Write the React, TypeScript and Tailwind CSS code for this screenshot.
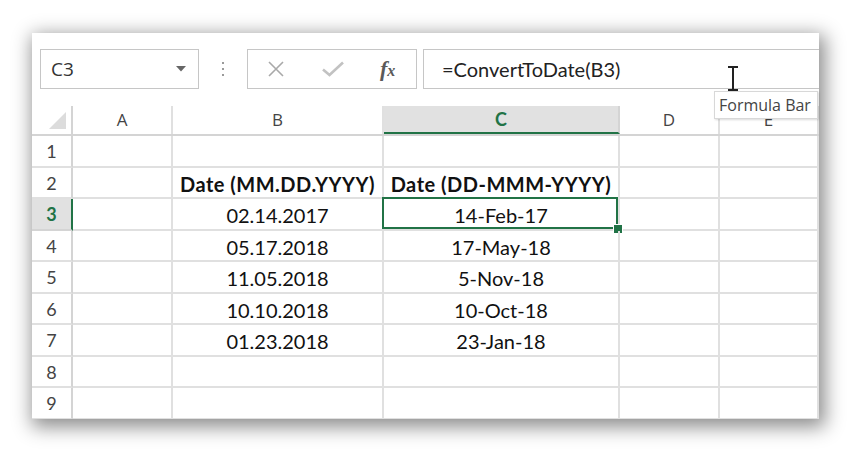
import React from 'react'

const cols = [
  { key: 'A', w: 'w-[100px]' },
  { key: 'B', w: 'w-[211px]' },
  { key: 'C', w: 'w-[236px]' },
  { key: 'D', w: 'w-[100px]' },
  { key: 'E', w: 'w-[99px]' },
]

const rows: { n: number; b: string; c: string; bold?: boolean }[] = [
  { n: 1, b: '', c: '' },
  { n: 2, b: 'Date (MM.DD.YYYY)', c: 'Date (DD-MMM-YYYY)', bold: true },
  { n: 3, b: '02.14.2017', c: '14-Feb-17' },
  { n: 4, b: '05.17.2018', c: '17-May-18' },
  { n: 5, b: '11.05.2018', c: '5-Nov-18' },
  { n: 6, b: '10.10.2018', c: '10-Oct-18' },
  { n: 7, b: '01.23.2018', c: '23-Jan-18' },
  { n: 8, b: '', c: '' },
  { n: 9, b: '', c: '' },
]

const cellFont = { fontFamily: 'Lato, "Open Sans", sans-serif' }
const uiFont = { fontFamily: '"Open Sans", "Noto Sans", sans-serif' }

export default function App() {
  return (
    <div className="relative w-[852px] h-[452px] bg-white pt-[33px] pl-[32px] overflow-hidden">
      <div className="w-[787px] h-[386px] bg-white flex flex-col overflow-hidden shadow-[3px_5px_18px_3px_rgba(0,0,0,0.45)]">
        {/* Name box + formula bar */}
        <div className="h-[73px] shrink-0 flex items-start pt-[16px] pl-[8px]">
          <div className="w-[159px] h-[40px] border border-[#c6c6c6] flex items-center justify-between pl-[10px] pr-[12px]">
            <span className="text-[19px] text-[#333]" style={uiFont}>C3</span>
            <svg width="10" height="6" viewBox="0 0 10 6">
              <polygon points="0,0 10,0 5,5.5" fill="#666" />
            </svg>
          </div>
          <div className="w-[48px] h-[40px] flex flex-col items-center justify-center gap-[4px]">
            <div className="w-[2px] h-[2px] bg-[#9a9a9a]" />
            <div className="w-[2px] h-[2px] bg-[#9a9a9a]" />
            <div className="w-[2px] h-[2px] bg-[#9a9a9a]" />
          </div>
          <div className="w-[170px] h-[40px] border border-[#c6c6c6] flex items-center">
            <svg className="ml-[19px]" width="18" height="18" viewBox="0 0 18 18">
              <path d="M2 2 L16 16 M16 2 L2 16" stroke="#a9a9a9" strokeWidth="1.6" />
            </svg>
            <svg className="ml-[37px]" width="22" height="16" viewBox="0 0 22 16">
              <path d="M1 8.5 L7.5 14 L21 1.5" stroke="#c2c2c2" strokeWidth="2.6" fill="none" />
            </svg>
            <span className="ml-[36px] italic font-bold text-[#5a5a5a] leading-none" style={{ fontFamily: '"Liberation Serif", serif' }}>
              <span className="text-[22px]">f</span>
              <span className="text-[16px]">x</span>
            </span>
          </div>
          <div className="ml-[6px] flex-1 h-[40px] border-y border-l border-[#c6c6c6] flex items-center pl-[18px]">
            <span className="text-[20px] text-[#222]" style={cellFont}>=ConvertToDate(B3)</span>
          </div>
        </div>

        {/* Column headers */}
        <div className="flex h-[30px] shrink-0 border-b-2 border-[#d4d4d4]" style={uiFont}>
          <div className="w-[41px] h-full border-r-2 border-[#d4d4d4] relative">
            <svg className="absolute right-[5px] bottom-[5px]" width="17" height="17" viewBox="0 0 17 17">
              <polygon points="17,0 17,17 0,17" fill="#dcdcdc" />
            </svg>
          </div>
          {cols.map(col =>
            col.key === 'C' ? (
              <div
                key={col.key}
                className={`${col.w} h-full -mb-[2px] bg-[#e1e1e1] border-r-2 border-[#d4d4d4] border-b-2 border-b-[#217346] flex items-center justify-center text-[18px] font-bold text-[#217346]`}
                style={cellFont}
              >
                {col.key}
              </div>
            ) : (
              <div
                key={col.key}
                className={`${col.w} h-full border-r-2 border-[#e0e0e0] flex items-center justify-center text-[17px] text-[#444]`}
              >
                {col.key}
              </div>
            )
          )}
        </div>

        {/* Rows */}
        <div className="flex flex-col" style={cellFont}>
          {rows.map(r => (
            <div key={r.n} className="flex h-[31.5px] shrink-0">
              {r.n === 3 ? (
                <div className="w-[41px] h-full bg-[#e1e1e1] border-b-2 border-[#d4d4d4] border-r-2 border-r-[#217346] flex items-center justify-center pt-[2px] text-[18px] font-bold text-[#217346]">
                  {r.n}
                </div>
              ) : (
                <div className="w-[41px] h-full border-b-2 border-[#e0e0e0] border-r-2 border-r-[#d4d4d4] flex items-center justify-center pt-[2px] text-[18px] text-[#444]">
                  {r.n}
                </div>
              )}
              <div className="w-[100px] h-full border-r-2 border-b-2 border-[#e0e0e0]" />
              <div
                className={`w-[211px] h-full border-r-2 border-b-2 border-[#e0e0e0] flex items-center justify-center pt-[3px] text-[20px] text-[#111] ${r.bold ? 'font-bold tracking-[0.5px]' : ''}`}
              >
                {r.b}
              </div>
              <div
                className={`relative w-[236px] h-full border-r-2 border-b-2 border-[#e0e0e0] flex items-center justify-center pt-[3px] text-[20px] text-[#111] ${r.bold ? 'font-bold tracking-[0.5px]' : ''}`}
              >
                {r.c}
                {r.n === 3 && (
                  <>
                    <div className="absolute -left-[2px] -top-[2px] right-0 bottom-0 border-2 border-[#217346]" />
                    <div className="absolute -right-[5px] -bottom-[5px] w-[10px] h-[10px] bg-[#217346] border border-white" />
                  </>
                )}
              </div>
              <div className="w-[100px] h-full border-r-2 border-b-2 border-[#e0e0e0]" />
              <div className="w-[99px] h-full border-r-2 border-b-2 border-[#e0e0e0]" />
            </div>
          ))}
        </div>
      </div>

      {/* I-beam cursor */}
      <svg className="absolute left-[727px] top-[66px]" width="12" height="25" viewBox="0 0 12 25">
        <path d="M1 1 H11 M6 1 V24 M1 24 H11" stroke="#222" strokeWidth="2" fill="none" />
      </svg>

      {/* Tooltip */}
      <div
        className="absolute left-[714px] top-[91px] w-[104px] h-[28px] bg-white border border-[#d8d8d8] shadow-[1px_1px_2px_rgba(0,0,0,0.15)] flex items-center pl-[4px] text-[16px] text-[#444]"
        style={uiFont}
      >
        Formula Bar
      </div>
    </div>
  )
}
